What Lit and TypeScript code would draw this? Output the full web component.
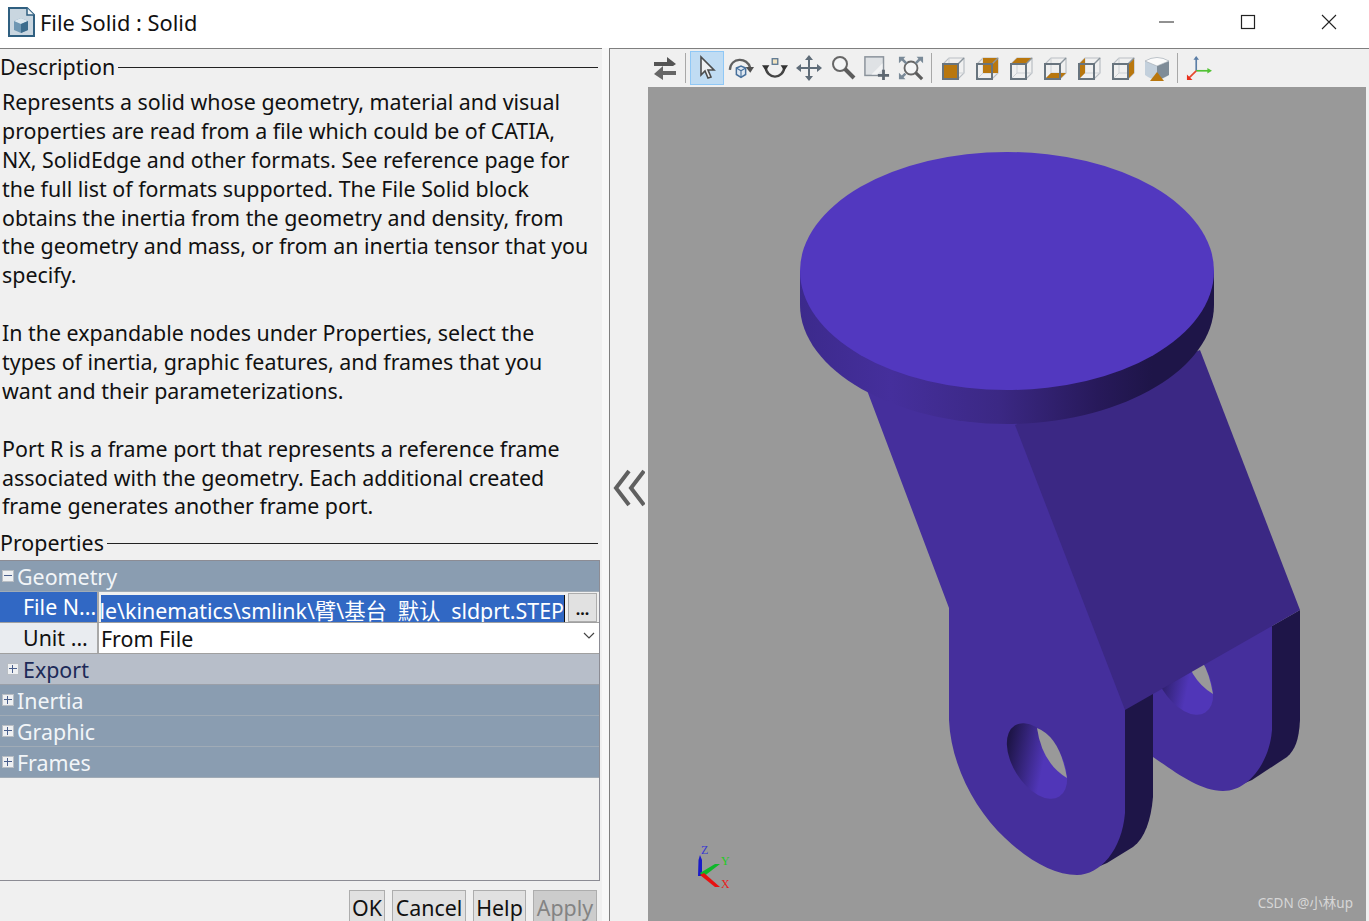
import {html, css, svg, LitElement} from 'lit';
import {customElement} from 'lit/decorators.js';

const DESCRIPTION = [
  'Represents a solid whose geometry, material and visual',
  'properties are read from a file which could be of CATIA,',
  'NX, SolidEdge and other formats. See reference page for',
  'the full list of formats supported. The File Solid block',
  'obtains the inertia from the geometry and density, from',
  'the geometry and mass, or from an inertia tensor that you',
  'specify.',
  '',
  'In the expandable nodes under Properties, select the',
  'types of inertia, graphic features, and frames that you',
  'want and their parameterizations.',
  '',
  'Port R is a frame port that represents a reference frame',
  'associated with the geometry. Each additional created',
  'frame generates another frame port.',
];

// cube icon, face says which side of the box is filled orange
const cube = (face: string) => svg`
  <svg class="icon" viewBox="0 0 26 26">
    <path d="M9 3h15v15l-6 6H3V9z" fill="none" stroke="#b9bec4" stroke-width="1.2"/>
    <path d="M9 3v15h15M9 18l-6 6" fill="none" stroke="#ced2d6" stroke-width="1"/>
    ${face === 'back' ? svg`<rect x="9" y="3" width="15" height="15" fill="#b9770e"/>` : ''}
    ${face === 'top' ? svg`<path d="M9 3h15l-6 6H3z" fill="#b9770e"/>` : ''}
    ${face === 'bottom' ? svg`<path d="M9 18h15l-6 6H3z" fill="#b9770e"/>` : ''}
    ${face === 'left' ? svg`<path d="M3 9l6-6v15l-6 6z" fill="#b9770e"/>` : ''}
    ${face === 'right' ? svg`<path d="M18 9l6-6v15l-6 6z" fill="#b9770e"/>` : ''}
    ${face === 'front' ? svg`<rect x="3" y="9" width="15" height="15" fill="#b9770e"/>` : ''}
    <path d="M18 9l6-6" stroke="#8a949c" stroke-width="1.4"/>
    <rect x="3" y="9" width="15" height="15" fill="none" stroke="#68747e" stroke-width="2"/>
  </svg>`;

const ICONS = {
  swap: svg`<svg class="icon" viewBox="0 0 26 26">
    <path d="M2 7h13V2l9 7-3 2H2z" fill="#555"/><path d="M24 16H11v-5l-9 8 9 6v-5h13z" fill="#666"/>
  </svg>`,
  pointer: svg`<svg class="icon" viewBox="0 0 26 26">
    <path d="M7 2v18l4-4 3 7 3-1-3-7h6z" fill="#eef0f2" stroke="#4d4d4d" stroke-width="1.6"/>
  </svg>`,
  rotate: svg`<svg class="icon" viewBox="0 0 28 26">
    <path d="M2 15C3 1 21 1 24 13" fill="none" stroke="#606060" stroke-width="2.6"/>
    <path d="M19 12h9l-4 6z" fill="#505050"/>
    <path d="M9 13l5-2 5 2v7l-5 3-5-3z" fill="#dfe8f2" stroke="#47709c" stroke-width="1.6"/>
    <path d="M9 13l5 3 5-3M14 16v7" fill="none" stroke="#47709c" stroke-width="1.2"/>
  </svg>`,
  roll: svg`<svg class="icon" viewBox="0 0 28 26">
    <path d="M4 11c0 15 20 15 20 0" fill="none" stroke="#444" stroke-width="2.6"/>
    <path d="M0 10h8l-4 6zM20 10h8l-4 6z" fill="#333"/>
    <rect x="11" y="3" width="6" height="6" fill="#f2e3c0" stroke="#5a7690" stroke-width="1.4"/>
  </svg>`,
  pan: svg`<svg class="icon" viewBox="0 0 26 26">
    <path d="M13 0l4 5h-3v7h7V9l5 4-5 4v-3h-7v7h3l-4 5-4-5h3v-7H5v3l-5-4 5-4v3h7V5H9z" fill="#5f6c78"/>
  </svg>`,
  zoom: svg`<svg class="icon" viewBox="0 0 26 26">
    <circle cx="10" cy="9" r="7" fill="#f4f5f6" stroke="#666" stroke-width="2"/>
    <path d="M15 14l9 9" stroke="#5c5c5c" stroke-width="4"/>
  </svg>`,
  zoomBox: svg`<svg class="icon" viewBox="0 0 28 26">
    <rect x="1" y="1" width="20" height="20" fill="#dfe2e5" stroke="#8b939b" stroke-width="1.6"/>
    <path d="M8 20L20 8v6L14 20z" fill="#f2f3f4"/>
    <path d="M21 15v11M15 21h12" stroke="#5c6670" stroke-width="3"/>
  </svg>`,
  fit: svg`<svg class="icon" viewBox="0 0 28 26">
    <circle cx="14" cy="13" r="7" fill="#f4f5f6" stroke="#666" stroke-width="2"/>
    <path d="M19 18l7 7" stroke="#5c5c5c" stroke-width="3.4"/>
    <path d="M1 8V1h7L6 3l4 4-2 2-4-4zM27 8V1h-7l2 2-4 4 2 2 4-4zM1 18v7h7l-2-2 3-3-2-2-3 3z" fill="#7a8a98"/>
  </svg>`,
  iso: svg`<svg class="icon" viewBox="0 0 26 26">
    <path d="M1 6q12-7 24 0v14q-12 9-24 0z" fill="#c3d0dc"/>
    <path d="M13 11l12-5v14l-12 6z" fill="#7f8c98"/>
    <path d="M1 6q12-7 24 0l-12 5z" fill="#fbfbfb" stroke="#a0a8b0" stroke-width="0.6"/>
    <path d="M13 17l7 9H6z" fill="#b9770e"/>
  </svg>`,
  axes: svg`<svg class="icon" viewBox="0 0 28 28">
    <path d="M11 17V3" stroke="#5b7ea6" stroke-width="1.8"/><path d="M8 5l3-4 3 4z" fill="#5b7ea6"/>
    <path d="M11 17h14" stroke="#52c234" stroke-width="1.8"/><path d="M23 14l5 3-5 3z" fill="#52c234"/>
    <path d="M11 17l-8 8" stroke="#e8482c" stroke-width="1.8"/><path d="M1 21v6h6z" fill="#e8301c"/>
  </svg>`,
};

@customElement('app-root')
export class AppRoot extends LitElement {
  static styles = css`
  :host {
    display: block;
    height: 921px;
    overflow: hidden;
    background: #f0f0f0;
    font-family: "Noto Sans", "Noto Sans CJK SC", sans-serif;
    font-size: 21.4px;
    color: #111;
  }

  .titlebar {
    height: 48px;
    background: #fff;
    display: flex;
    align-items: center;
    padding: 0 0 4px 8px;
    box-sizing: border-box;
  }
  .titlebar .name { flex: 1; font-size: 21.8px; margin-left: 5px; }
  .win {
    width: 81px;
    height: 44px;
    display: flex;
    align-items: center;
    justify-content: center;
  }

  .main { display: flex; height: 873px; background: #f8f8f8; }

  .left {
    width: 602px;
    flex: none;
    box-sizing: border-box;
    padding-right: 2px;
    border-top: 1px solid #7f7f7f;
    background: #f0f0f0;
    display: flex;
    flex-direction: column;
  }
  .legend {
    display: flex;
    align-items: center;
    height: 36px;
    padding-right: 2px;
    line-height: 36px;
    flex: none;
  }
  .legend::after {
    content: '';
    flex: 1;
    height: 1px;
    background: #222;
    margin-left: 3px;
  }
  .description { padding: 0 0 0 2px; height: 437px; margin-top: 3px; flex: none; }
  .description div { height: 28.9px; line-height: 28.9px; white-space: nowrap; }

  .tree {
    height: 321px;
    flex: none;
    box-sizing: border-box;
    border: 1px solid #8c8c94;
    border-left: none;
    background: #f0f0f0;
    margin-top: -1px;
  }
  .group {
    height: 31px;
    box-sizing: border-box;
    background: #8a9db1;
    border-bottom: 1px solid #a0abb6;
    color: #f2f5f8;
    display: flex;
    align-items: center;
    gap: 3px;
    padding-left: 2px;
  }
  .group.sub {
    background: #b7bec9;
    color: #1c2a58;
    padding-left: 7px;
    gap: 4px;
    border-bottom-color: #9a9fa8;
  }
  .toggle {
    width: 10px;
    height: 10px;
    flex: none;
    border: 1px solid #b9bec4;
    background: #eef0f2;
    position: relative;
  }
  .toggle::before {
    content: '';
    position: absolute;
    left: 1px;
    right: 1px;
    top: 4px;
    height: 1px;
    background: #4a5f8c;
  }
  .toggle.plus::after {
    content: '';
    position: absolute;
    top: 1px;
    bottom: 1px;
    left: 4px;
    width: 1px;
    background: #4a5f8c;
  }

  .row {
    height: 31px;
    box-sizing: border-box;
    display: flex;
    border-bottom: 1px solid #a0a0a0;
  }
  .label {
    width: 99px;
    flex: none;
    box-sizing: border-box;
    padding-left: 23px;
    border-right: 2px solid #a8a8a8;
    background: #e9ecf0;
    line-height: 29px;
    white-space: nowrap;
  }
  .row.selected .label { background: #3168c4; color: #fff; }
  .field {
    flex: 1;
    min-width: 0;
    display: flex;
    background: #fff;
    padding-left: 2px;
    align-items: center;
    position: relative;
  }
  .row.selected .field { background: #f0f0f0; align-items: flex-end; gap: 3px; padding-right: 2px; }
  .path {
    flex: 1;
    min-width: 0;
    height: 27px;
    line-height: 31px;
    background: #3168c4;
    color: #fff;
    overflow: hidden;
    display: flex;
    justify-content: flex-end;
    white-space: nowrap;
    border-right: 1px solid #111;
  }
  .browse {
    width: 29px;
    height: 29px;
    box-sizing: border-box;
    background: #e1e1e1;
    border: 1px solid #adadad;
    font-size: 16px;
    font-weight: bold;
    line-height: 30px;
    text-align: center;
  }
  .chevron { position: absolute; right: 3px; top: 8px; }

  .actions {
    display: flex;
    justify-content: flex-end;
    gap: 7px;
    padding: 9px 3px 0 0;
  }
  .actions button {
    font: inherit;
    color: #111;
    height: 34px;
    padding: 0;
    background: #e1e1e1;
    border: 1px solid #adadad;
    margin: 0;
    display: block;
    white-space: nowrap;
  }
  .actions button:disabled { background: #cccccc; color: #838383; }
  .actions .ok { width: 36px; }
  .actions .cancel { width: 74px; }
  .actions .help { width: 53px; }
  .actions .apply { width: 64px; }

  .right {
    flex: 1;
    margin-left: 7px;
    border-top: 1px solid #7f7f7f;
    border-left: 1px solid #7f7f7f;
    background: #f0f0f0;
    display: flex;
    flex-direction: column;
    min-width: 0;
  }
  .toolbar {
    height: 38px;
    flex: none;
    display: flex;
    align-items: center;
    padding-left: 38px;
    box-sizing: border-box;
  }
  .tool {
    width: 34px;
    height: 34px;
    box-sizing: border-box;
    display: flex;
    align-items: center;
    justify-content: center;
  }
  .tool.active { background: #c0dcf3; border: 1px solid #90c8f6; }
  .icon { width: 26px; height: 26px; display: block; }
  .sep { width: 1px; height: 30px; background: #a8a8a8; margin: 0 4px 0 3px; flex: none; }

  .stage { flex: 1; display: flex; min-height: 0; }
  .collapse {
    width: 38px;
    flex: none;
    display: flex;
    align-items: center;
    justify-content: center;
    padding-bottom: 32px;
    box-sizing: border-box;
  }
  .viewer { flex: 1; margin-right: 3px; background: #999; position: relative; overflow: hidden; }
  .viewer svg { display: block; }
  .watermark {
    position: absolute;
    right: 13px;
    bottom: 9px;
    font-size: 13.5px;
    color: #d6d6d6;
  }
  `;

  private renderModel() {
    return svg`
    <svg width="718" height="834" viewBox="648 87 718 834">
      <defs>
        <linearGradient id="rim" x1="800" x2="1214" y1="0" y2="0" gradientUnits="userSpaceOnUse">
          <stop offset="0" stop-color="#3c2a8c"/>
          <stop offset="0.22" stop-color="#452f9c"/>
          <stop offset="0.48" stop-color="#3b2884"/>
          <stop offset="0.72" stop-color="#27195a"/>
          <stop offset="0.85" stop-color="#1e1548"/>
          <stop offset="1" stop-color="#1e1548"/>
        </linearGradient>
        <linearGradient id="bore" x1="0" x2="0.45" y1="0.1" y2="0.85">
          <stop offset="0.15" stop-color="#1e1548"/>
          <stop offset="0.8" stop-color="#5036b8"/>
        </linearGradient>
      </defs>
      <!-- far lug -->
      <path d="M1272 626L1300 610V720C1299 740 1295 750 1287 757L1252 780L1240 785L1260 640Z" fill="#1e1548"/>
      <path d="M1150 680L1272 615V730C1270 760 1250 791 1223 791C1200 791 1175 772 1153 757Z" fill="#452f9c"/>
      <ellipse cx="1183" cy="677" rx="24" ry="42" transform="rotate(-32 1183 677)" fill="url(#bore)"/>
      <path d="M1183 644Q1206 653 1213 694Q1188 679 1183 644Z" fill="#999"/>
      <!-- near lug edge -->
      <path d="M1120 700L1153 690V797C1151 820 1145 838 1133 847L1107 863L1100 866Z" fill="#1e1548"/>
      <!-- near lug and arm -->
      <path d="M865 385L949 608V720C951 765 975 810 1005 838C1030 862 1055 875 1077 875C1100 875 1122 850 1125 813V708L1030 420Z" fill="#452f9c"/>
      <ellipse cx="1037" cy="761" rx="24" ry="42" transform="rotate(-32 1037 761)" fill="url(#bore)"/>
      <path d="M1037 728Q1060 737 1067 778Q1042 763 1037 728Z" fill="#999"/>
      <path d="M1015 425L1200 350L1300 610L1125 710Z" fill="#3b2884"/>
      <!-- flange -->
      <path d="M800 271V305C800 370 895 424 1007 424C1119 424 1214 370 1214 305V271Z" fill="url(#rim)"/>
      <ellipse cx="1007" cy="271" rx="207" ry="119" fill="#5238bf"/>
      <!-- triad -->
      <path d="M698 876L698.5 860L700 855L702 860V876Z" fill="#1a1ac8"/>
      <path d="M700 873L715 864L720 864L703 877Z" fill="#0fb82a"/>
      <path d="M700 875L704 873L720 887L715 887Z" fill="#e81010"/>
      <text x="701" y="854" font-family="Liberation Serif" font-size="12" fill="#3a3ad0">Z</text>
      <text x="721" y="865" font-family="Liberation Serif" font-size="12" fill="#22cc22">Y</text>
      <text x="721" y="888" font-family="Liberation Serif" font-size="12" fill="#e82020">X</text>
    </svg>`;
  }

  render() {
    return html`
    <div class="titlebar">
      <svg width="27" height="30" viewBox="0 0 27 30">
        <path d="M1 1h18l7 7v21H1z" fill="#c9d6e0" stroke="#2f5f80" stroke-width="2"/>
        <path d="M19 1v7h7" fill="#eef3f6" stroke="#2f5f80" stroke-width="1.5"/>
        <path d="M6 14l7-3 7 3v9l-7 3-7-3z" fill="#6f97b3"/>
        <path d="M6 14l7 3 7-3-7-3z" fill="#dce7ee"/>
        <path d="M13 17l7-3v9l-7 3z" fill="#3d6d8d"/>
      </svg>
      <span class="name">File Solid : Solid</span>
      <div class="win">
        <svg width="16" height="16" viewBox="0 0 16 16"><path d="M0 8h15" stroke="#222"/></svg>
      </div>
      <div class="win">
        <svg width="16" height="16" viewBox="0 0 16 16"><rect x="1.5" y="1.5" width="13" height="13" fill="none" stroke="#222" stroke-width="1.2"/></svg>
      </div>
      <div class="win">
        <svg width="16" height="16" viewBox="0 0 16 16"><path d="M1 1l14 14M15 1L1 15" stroke="#222" stroke-width="1.1"/></svg>
      </div>
    </div>

    <div class="main">
      <div class="left">
        <div class="legend">Description</div>
        <div class="description">
          ${DESCRIPTION.map((line) => html`<div>${line}</div>`)}
        </div>
        <div class="legend">Properties</div>
        <div class="tree">
          <div class="group"><span class="toggle"></span>Geometry</div>
          <div class="row selected">
            <div class="label">File N...</div>
            <div class="field">
              <div class="path"><span>le\\kinematics\\smlink\\臂\\基台\u2002默认\u2002sldprt.STEP</span></div>
              <div class="browse">...</div>
            </div>
          </div>
          <div class="row">
            <div class="label">Unit ...</div>
            <div class="field">
              From File
              <svg class="chevron" width="14" height="10" viewBox="0 0 14 10"><path d="M2 2l5 5 5-5" fill="none" stroke="#444" stroke-width="1.2"/></svg>
            </div>
          </div>
          <div class="group sub"><span class="toggle plus"></span>Export</div>
          <div class="group"><span class="toggle plus"></span>Inertia</div>
          <div class="group"><span class="toggle plus"></span>Graphic</div>
          <div class="group"><span class="toggle plus"></span>Frames</div>
        </div>
        <div class="actions">
          <button class="ok">OK</button>
          <button class="cancel">Cancel</button>
          <button class="help">Help</button>
          <button class="apply" disabled>Apply</button>
        </div>
      </div>

      <div class="right">
        <div class="toolbar">
          <div class="tool">${ICONS.swap}</div>
          <div class="sep"></div>
          <div class="tool active">${ICONS.pointer}</div>
          <div class="tool">${ICONS.rotate}</div>
          <div class="tool">${ICONS.roll}</div>
          <div class="tool">${ICONS.pan}</div>
          <div class="tool">${ICONS.zoom}</div>
          <div class="tool">${ICONS.zoomBox}</div>
          <div class="tool">${ICONS.fit}</div>
          <div class="sep"></div>
          <div class="tool">${cube('front')}</div>
          <div class="tool">${cube('back')}</div>
          <div class="tool">${cube('top')}</div>
          <div class="tool">${cube('bottom')}</div>
          <div class="tool">${cube('left')}</div>
          <div class="tool">${cube('right')}</div>
          <div class="tool">${ICONS.iso}</div>
          <div class="sep"></div>
          <div class="tool">${ICONS.axes}</div>
        </div>
        <div class="stage">
          <div class="collapse">
            <svg width="32" height="38" viewBox="0 0 32 38">
              <path d="M16 2L3 19l13 17M31 2L18 19l13 17" fill="none" stroke="#606060" stroke-width="4"/>
            </svg>
          </div>
          <div class="viewer">
            ${this.renderModel()}
            <div class="watermark">CSDN @小林up</div>
          </div>
        </div>
      </div>
    </div>
    `;
  }
}
